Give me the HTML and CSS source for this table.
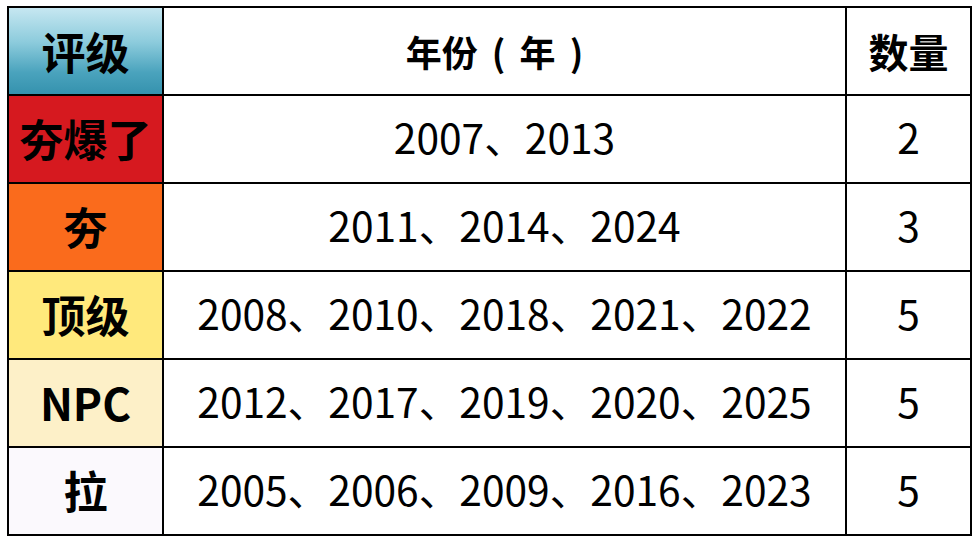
FILE: index.html
```html
<!DOCTYPE html>
<html lang="zh">
<head>
<meta charset="utf-8">
<link rel="stylesheet" href="styles.css">
</head>
<body>
<div class="table">
  <div class="cell grade head-grade">评级</div>
  <div class="cell head-year">年份 ( 年 )</div>
  <div class="cell head-count">数量</div>

  <div class="cell grade g-red">夯爆了</div>
  <div class="cell val">2007、2013</div>
  <div class="cell val">2</div>

  <div class="cell grade g-orange">夯</div>
  <div class="cell val">2011、2014、2024</div>
  <div class="cell val">3</div>

  <div class="cell grade g-yellow">顶级</div>
  <div class="cell val">2008、2010、2018、2021、2022</div>
  <div class="cell val">5</div>

  <div class="cell grade g-cream">NPC</div>
  <div class="cell val">2012、2017、2019、2020、2025</div>
  <div class="cell val">5</div>

  <div class="cell grade g-pale">拉</div>
  <div class="cell val">2005、2006、2009、2016、2023</div>
  <div class="cell val">5</div>
</div>
</body>
</html>
```
FILE: styles.css
```css
html, body {
  margin: 0;
  padding: 0;
  background: #ffffff;
}
body {
  padding: 6px 0 0 7px;
  font-family: "Noto Sans CJK SC", "Noto Sans", sans-serif;
  color: #000;
}
.table {
  display: grid;
  grid-template-columns: 153px 681px 123px;
  grid-auto-rows: 86px;
  gap: 2px;
  padding: 2px;
  background: #000;
  width: max-content;
}
.cell {
  background: #fff;
  display: flex;
  align-items: center;
  justify-content: center;
  white-space: pre;
  box-sizing: border-box;
}
.grade {
  font-size: 44px;
  font-weight: 700;
  padding-bottom: 3px;
}
.head-grade {
  background: linear-gradient(to bottom, #c6e7f1 0%, #8ccbdc 40%, #4aa3bd 75%, #3592ae 100%);
  padding-bottom: 0;
}
.head-year {
  font-size: 36px;
  font-weight: 700;
  word-spacing: 6px;
  padding-right: 20px;
}
.head-count {
  font-size: 40px;
  font-weight: 700;
}
.val {
  font-size: 40.7px;
  font-weight: 400;
  padding-bottom: 6px;
}
.g-red { background: #d6191f; }
.g-orange { background: #fa6b1c; }
.g-yellow { background: #ffe97c; }
.g-cream { background: #fdf0c8; }
.g-pale { background: #fbf9fd; }
```
